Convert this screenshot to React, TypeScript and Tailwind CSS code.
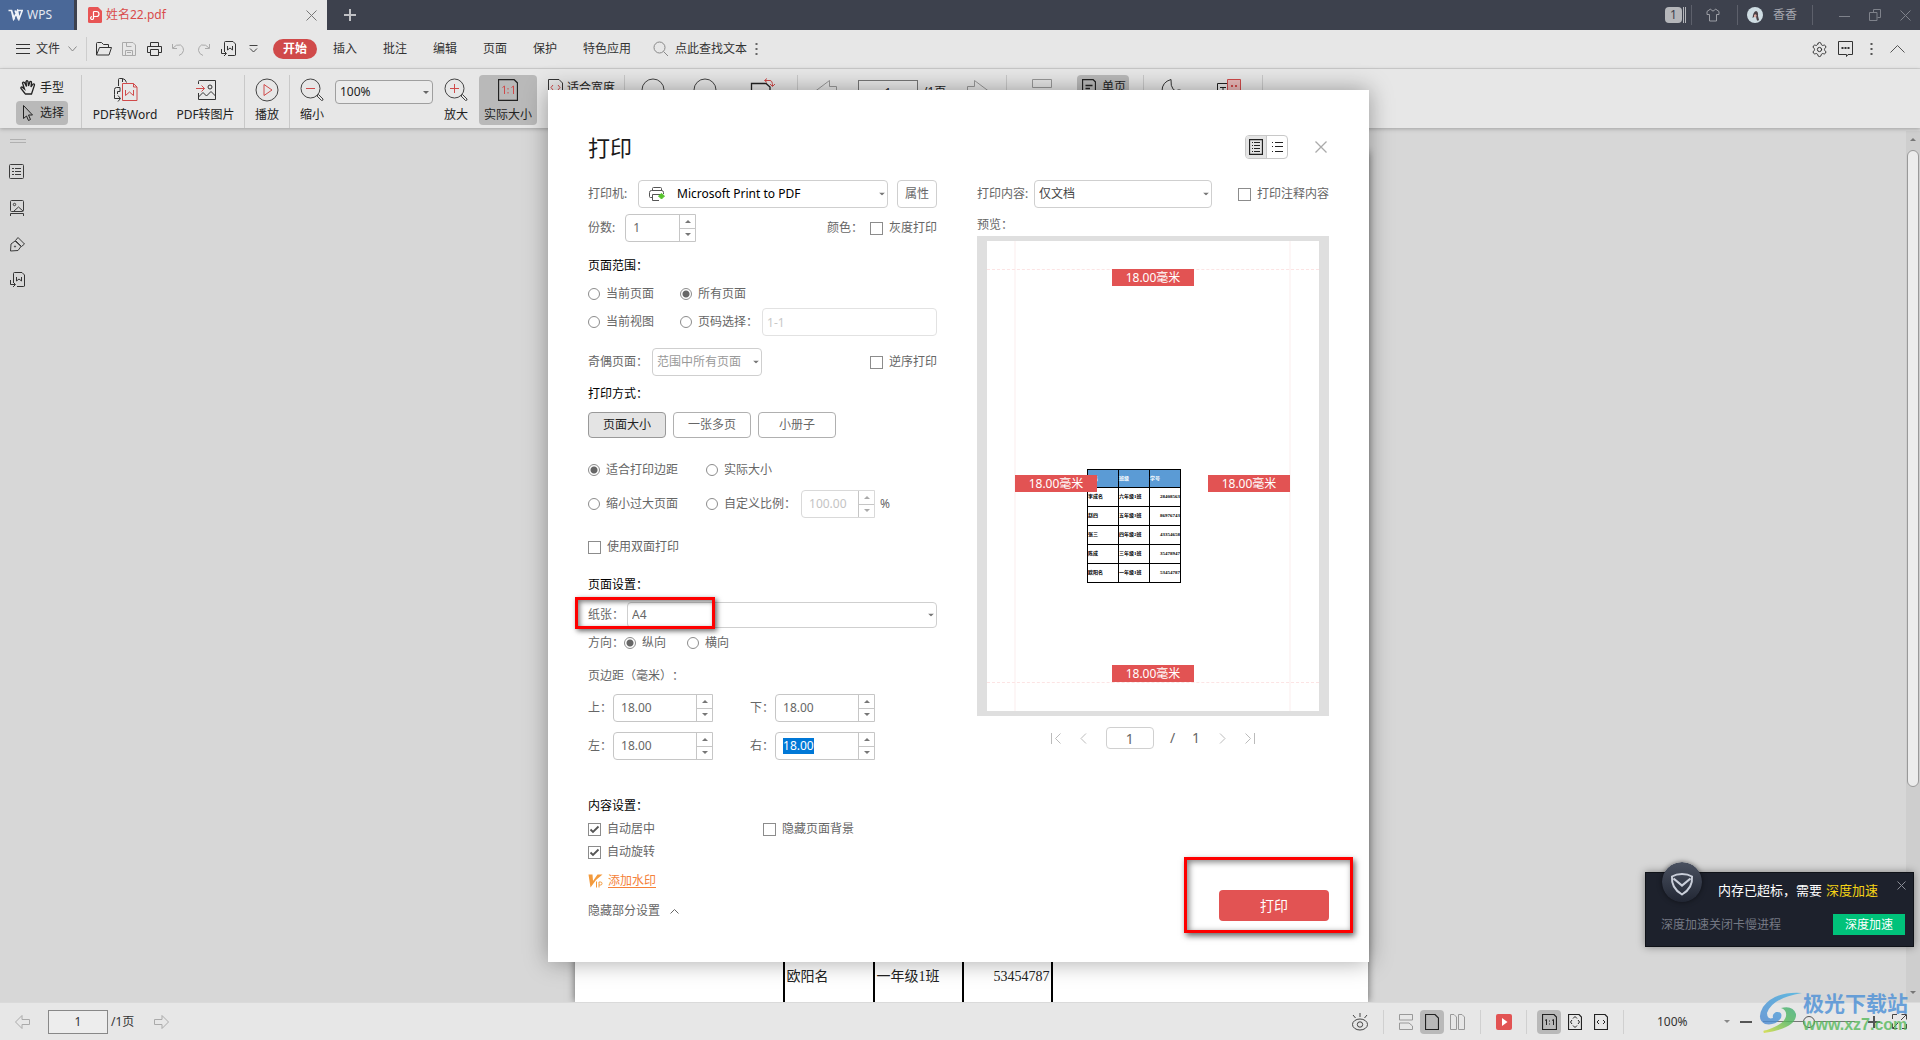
import React, { useEffect, useRef } from "react";
import { Settings as GearIcon } from "lucide-react";

type Kids = { children?: React.ReactNode };

/* ---------- drawing helpers ---------- */

function Ic({ w = 16, h = 16, c = "#3c3c3c", sw = 1, children }: Kids & { w?: number; h?: number; c?: string; sw?: number }) {
  return (
    <svg width={w} height={h} viewBox={`0 0 ${w} ${h}`} fill="none" stroke={c} strokeWidth={sw} className="block shrink-0" aria-hidden="true">
      {children}
    </svg>
  );
}

const Caret = ({ up = false, c = "#666" }: { up?: boolean; c?: string }) => (
  <svg width="6" height="3" viewBox="0 0 6 3" className="block" aria-hidden="true">
    <path d={up ? "M0 3L3 0L6 3Z" : "M0 0H6L3 3Z"} fill={c} />
  </svg>
);

const Sep = () => <span className="h-[53px] w-px shrink-0 self-center bg-[#c9c9c9]" />;

/* ---------- title bar ---------- */

function TitleBar() {
  return (
    <header className="flex h-[30px] shrink-0 items-stretch bg-[#3d414d] text-xs text-[#a4a6ad]">
      <button className="flex w-[74px] items-center gap-1 bg-[#4a6898] pl-2 text-[#e4e9f1]">
        <Ic w={15} h={12} c="#eef2f8" sw={1.6}>
          <path d="M0.5 1.5H3.5L5.5 10L9.5 1.5L11 10L14.2 1.5H9M3.5 1.5L6.5 10.5M7 1.5L10.5 10.5" />
        </Ic>
        WPS
      </button>
      <div className="ml-[3px] flex w-[250px] items-center bg-[#e7e7e7] pl-[11px] text-[#d94b4b]">
        <Ic w={14} h={16} c="#fff" sw={1.2}>
          <path d="M0 1.5Q0 0 1.5 0H10L14 4V14.500Q14 16 12.500 16H1.500Q0 16 0 14.500Z" fill="#e85555" stroke="none" />
          <path d="M5.500 4.500H8.500A2.500 2.500 0 0 1 8.500 9.500H5.500M5.500 4.500V10.500A1.500 1.500 0 1 1 4 9.500" />
        </Ic>
        <span className="ml-1">姓名22.pdf</span>
        <button aria-label="关闭标签" className="ml-auto mr-[10px]">
          <Ic w={11} h={11} c="#777"><path d="M0.500 0.500L10.500 10.500M10.500 0.500L0.500 10.500" /></Ic>
        </button>
      </div>
      <button aria-label="新建" className="ml-[17px] flex items-center">
        <Ic w={12} h={12} c="#c0c1c5" sw={2}><path d="M6 0V12M0 6H12" /></Ic>
      </button>
      <div className="ml-auto flex items-center">
        <span className="flex h-4 w-[17px] items-center justify-center rounded-sm bg-[#b5b6ba] text-[#3d414d]">1</span>
        <span className="ml-px h-4 w-[3px] border-x border-[#b5b6ba]" />
        <span className="ml-[5px] h-5 w-px bg-[#5d606b]" />
        <button aria-label="皮肤" className="ml-[14px]">
          <Ic w={14} h={14} c="#9c9ea5">
            <path d="M4.500 1L1 3.500V6.500H3.500V13H10.500V6.500H13V3.500L9.500 1Q7 5 4.500 1Z" />
          </Ic>
        </button>
        <span className="ml-[17px] h-5 w-px bg-[#5d606b]" />
        <button className="ml-[9px] flex items-center gap-[10px]">
          <svg width="16" height="16" viewBox="0 0 16 16" aria-hidden="true">
            <circle cx="8" cy="8" r="8" fill="#cfdde3" />
            <path d="M5.500 11Q6 5 9 4Q11.500 4.500 11 9L12 13Q10 15 9.500 12L9 9.500L7 10Z" fill="#4b4147" />
            <path d="M7 8Q9 6.500 9.500 8.500L9 10.500L7 10Z" fill="#d9a8a0" />
          </svg>
          香香
        </button>
        <span className="ml-[15px] h-5 w-px bg-[#5d606b]" />
        <button aria-label="最小化" className="ml-[26px]"><Ic w={11} h={12} c="#7f828b"><path d="M0 7.500H11" /></Ic></button>
        <button aria-label="还原" className="ml-[19px]">
          <Ic w={12} h={12} c="#7f828b"><path d="M4.500 3.500V0.500H11.500V8.500H8.500M0.500 3.500H8V11.500H0.500Z" /></Ic>
        </button>
        <button aria-label="关闭" className="ml-[19px] mr-[9px]"><Ic w={11} h={11} c="#7f828b"><path d="M0.500 0.500L10.500 10.500M10.500 0.500L0.500 10.500" /></Ic></button>
      </div>
    </header>
  );
}

/* ---------- menu row ---------- */

const DocWord = () => (
  <Ic w={17} h={16} c="#333">
    <path d="M4.500 10V1.500Q4.500 0.500 5.500 0.500H13L15.500 3V14Q15.500 14.500 14.500 14.500H8" />
    <path d="M7.500 5V9L10 7L12.500 9V5M1.500 8V12.500H6M4 10L6.500 12.500L4 15" />
  </Ic>
);

function MenuBar() {
  return (
    <nav className="flex h-[39px] shrink-0 items-center border-b border-[#d3d3d3] bg-[#e7e7e7] text-xs text-[#333]">
      <button className="ml-4 flex items-center">
        <Ic w={14} h={10} c="#333"><path d="M0 0.500H14M0 4.500H14M0 9.500H14" /></Ic>
        <span className="ml-[6px]">文件</span>
        <span className="ml-2"><Ic w={9} h={6} c="#888"><path d="M0.500 0.500L4.500 5L8.500 0.500" /></Ic></span>
      </button>
      <span className="ml-[9px] h-6 w-px bg-[#cdcdcd]" />
      <button aria-label="打开" className="ml-2">
        <Ic w={18} h={14} c="#333"><path d="M1.500 13V1.500Q1.500 0.500 2.500 0.500H6.500L8.500 2.500H13.500V5.500M1.500 13L4.500 5.500H16.500L14 13Z" /></Ic>
      </button>
      <button aria-label="保存" className="ml-[9px]">
        <Ic w={14} h={14} c="#aaa"><path d="M0.500 0.500H11L13.500 3V13.500H0.500ZM3.500 13V8.500H10.500V13M4.500 0.500V4.500H9.500M5 10.500H9" /></Ic>
      </button>
      <button aria-label="打印" className="ml-[11px]">
        <Ic w={15} h={14} c="#333"><path d="M3.500 4V0.500H11.500V4M3.500 10.500H0.500V4.500H14.500V10.500H11.500M3.500 7.500H11.500V13.500H3.500Z" /></Ic>
      </button>
      <button aria-label="撤销" className="ml-[10px]">
        <Ic w={13} h={13} c="#aaa"><path d="M0.500 1V5.500H5M1 5Q4 1 8.500 2Q12 4 11.500 7.500Q11 11 7 12.500" /></Ic>
      </button>
      <button aria-label="重做" className="ml-[12px]">
        <Ic w={13} h={13} c="#aaa"><path d="M12.500 1V5.500H8M12 5Q9 1 4.500 2Q1 4 1.500 7.500Q2 11 6 12.500" /></Ic>
      </button>
      <button aria-label="导出" className="ml-[10px]"><DocWord /></button>
      <button aria-label="更多" className="ml-[12px]">
        <Ic w={9} h={8} c="#444"><path d="M0.500 0.500H8.500M1 3.500L4.500 7L8 3.500" /></Ic>
      </button>
      <button className="ml-[15px] h-5 w-11 rounded-full bg-[#d04a4a] font-bold text-white">开始</button>
      <div className="ml-4 flex gap-[26px]">
        <button>插入</button>
        <button>批注</button>
        <button>编辑</button>
        <button>页面</button>
        <button>保护</button>
        <button>特色应用</button>
      </div>
      <button className="ml-[22px] flex items-center gap-[6px]">
        <Ic w={16} h={16} c="#888"><circle cx="6.500" cy="6.500" r="5.500" /><path d="M10.500 10.500L15 15" /></Ic>
        点此查找文本
      </button>
      <span className="ml-2"><Ic w={3} h={14} c="none"><path d="M0.500 1h2v2h-2zM0.500 6h2v2h-2zM0.500 11h2v2h-2z" fill="#666" /></Ic></span>
      <div className="ml-auto mr-[15px] flex items-center">
        <button aria-label="设置"><GearIcon size={17} strokeWidth={1.4} color="#333" /></button>
        <button aria-label="反馈" className="ml-[9px]">
          <Ic w={17} h={16} c="#333"><path d="M1.500 0.500H15.500V13.500H11L9.500 15.500V13.500H1.500Z" /><path d="M4.500 7h2M7.500 7h2M10.500 7h2" strokeWidth="2" /></Ic>
        </button>
        <span className="ml-4"><Ic w={3} h={14} c="none"><path d="M0.500 1h2v2h-2zM0.500 6h2v2h-2zM0.500 11h2v2h-2z" fill="#555" /></Ic></span>
        <button aria-label="收起" className="ml-[17px]"><Ic w={15} h={8} c="#555"><path d="M0.500 7.500L7.500 0.500L14.500 7.500" /></Ic></button>
      </div>
    </nav>
  );
}

/* ---------- ribbon ---------- */

function BigBtn({ icon, label, className }: { icon: React.ReactNode; label: string; className: string }) {
  return (
    <button className={`flex h-[50px] shrink-0 flex-col items-center rounded pt-[3px] ${className}`}>
      <span className="flex h-6 items-center">{icon}</span>
      <span className="mt-[5px] whitespace-nowrap leading-4">{label}</span>
    </button>
  );
}

const Lens = ({ plus = false }: { plus?: boolean }) => (
  <Ic w={24} h={24} c="#444">
    <circle cx="10.500" cy="10.500" r="9.500" />
    <path d="M17 18L18.500 16.500L23 21Q23.500 22.500 21.500 22.500Z" />
    <path d={plus ? "M6 10.500H15M10.500 6V15" : "M6 10.500H15"} stroke="#d04a4a" />
  </Ic>
);

function Ribbon() {
  return (
    <div className="z-10 flex h-[59px] shrink-0 items-start bg-[#e7e7e7] pt-[6px] text-xs text-[#222] shadow-[0_1px_4px_rgba(0,0,0,0.25)]">
      <div className="ml-4 flex w-[52px] shrink-0 flex-col gap-px">
        <button className="flex h-[25px] items-center gap-1 pl-1">
          <Ic w={16} h={15} c="#222">
            <path d="M5 13.500L1 8.500Q0.500 7 2 7L4.500 9L2.500 3Q3 1.500 4.500 2.500L6.500 6.500L6 1.500Q7 0 8 1.500L8.500 6L10 1.500Q11.500 1 11.500 2.500L11 7L13 4Q14.500 3.500 14.500 5L12.500 11L11.500 14H5.500Z" strokeWidth="1.300" />
          </Ic>
          手型
        </button>
        <button className="flex h-6 items-center gap-[7px] rounded bg-[#b9b9b9] pl-[7px]">
          <Ic w={10} h={16} c="#222"><path d="M0.500 0.500V13.500L3.500 11L5.500 15.500L7.500 14.500L5.500 10H9.500Z" /></Ic>
          选择
        </button>
      </div>
      <span className="w-[13px] shrink-0" />
      <Sep />
      <BigBtn className="w-[86px]" label="PDF转Word" icon={
        <Ic w={25} h={24} c="#333">
          <path d="M5.500 8V1.500Q5.500 0.500 6.500 0.500H9.500Q12.500 1 13.500 4.500M9.500 0.500V4M1.500 16.500V11.500Q1.500 9.500 3.500 9.500H7V13.500H4.500V16M1.500 16.500V20.500H7M5 17.500L7.500 20.500L5 23.500" />
          <path d="M9.500 5.500H20.500L24 9V22.500H9.500ZM20.500 5.500V9H24M12.500 12V17.500L16.500 14L20.500 17.500V12" stroke="#d04a4a" />
        </Ic>
      } />
      <BigBtn className="w-[75px]" label="PDF转图片" icon={
        <Ic w={22} h={22} c="#333">
          <path d="M3.500 5V2.500Q3.500 1.500 4.500 1.500H20.500V20.500H3.500V14M3.500 18L8 13.500L11.500 17L16 12.500L20.500 17" />
          <circle cx="15" cy="8" r="2" />
          <path d="M1 9.500H9.500M6.500 6.500L9.500 9.500L6.500 12.500" stroke="#d04a4a" />
        </Ic>
      } />
      <span className="w-px shrink-0" />
      <Sep />
      <BigBtn className="w-11" label="播放" icon={
        <Ic w={24} h={24} c="#444"><circle cx="12" cy="12" r="11" /><path d="M9 6.500V17.500L17 12Z" stroke="#d04a4a" /></Ic>
      } />
      <Sep />
      <BigBtn className="w-11" label="缩小" icon={<Lens />} />
      <div className="relative mt-[5px] ml-px h-6 w-[98px] shrink-0">
        <select aria-label="缩放比例" className="h-full w-full appearance-none rounded-sm border border-[#9f9f9f] bg-[#ebebeb] pl-1">
          <option>100%</option>
        </select>
        <span className="pointer-events-none absolute top-[11px] right-1"><Caret /></span>
      </div>
      <BigBtn className="w-[46px]" label="放大" icon={<Lens plus />} />
      <BigBtn className="w-[58px] bg-[#b9b9b9]" label="实际大小" icon={
        <Ic w={20} h={22} c="#222">
          <path d="M0.500 0.500H16L19.500 4V21.500H0.500Z" strokeWidth="1.300" />
          <path d="M4.500 8.500L6.500 7V15M13.500 8.500L15.500 7V15M10 9V10.500M10 13V14.500" stroke="#d04a4a" />
        </Ic>
      } />
      <div className="mt-1 ml-[11px] flex shrink-0 items-center gap-1 leading-4">
        <Ic w={15} h={18} c="#333"><path d="M0.500 0.500H11L14.500 4V17.500H0.500Z" /><path d="M5 6L3 8.500L5 11M10 6L12 8.500L10 11" stroke="#d04a4a" /></Ic>
        适合宽度
      </div>
      <span className="w-[9px] shrink-0" />
      <Sep />
      <div className="mt-[3px] flex shrink-0">
        <span className="flex w-[56px] justify-center"><Ic w={24} h={24} c="#444"><circle cx="12" cy="12" r="11" /></Ic></span>
        <span className="flex w-[48px] justify-center"><Ic w={24} h={24} c="#444"><circle cx="12" cy="12" r="11" /></Ic></span>
        <span className="flex w-[68px] justify-center">
          <Ic w={26} h={24} c="#222"><path d="M1.500 20V5.500H16L20 9V20Z" strokeWidth="1.300" /><path d="M17 0.500L14.500 2.500L17 4.500M15 2.500H20Q22.500 2.500 22.500 8M20 6L22.500 8.500L25 6" stroke="#d04a4a" /></Ic>
        </span>
      </div>
      <Sep />
      <span className="mt-[5px] ml-[17px]"><Ic w={22} h={22} c="#999"><path d="M0.500 11L14.500 0.500V6.500H21.500V16H14.500V21.500Z" /></Ic></span>
      <input aria-label="当前页" defaultValue="1" className="mt-[5px] ml-[21px] h-6 w-[60px] shrink-0 border border-[#777] bg-[#ebebeb] text-center" />
      <span className="mt-[9px] ml-[5px] w-6 shrink-0 whitespace-nowrap">/1页</span>
      <span className="mt-[5px] ml-[20px]"><Ic w={22} h={22} c="#999"><path d="M21.500 11L7.500 0.500V6.500H0.500V16H7.500V21.500Z" /></Ic></span>
      <span className="w-[17px] shrink-0" />
      <Sep />
      <span className="mt-1 ml-[25px]"><Ic w={20} h={22} c="#999"><path d="M0.500 0.500H19.500V8.500H0.500ZM0.500 21V11.500H19.500V21" /></Ic></span>
      <button className="ml-[25px] flex h-6 w-[52px] shrink-0 items-center gap-[6px] rounded bg-[#b9b9b9] pl-[5px] whitespace-nowrap">
        <Ic w={14} h={16} c="#222"><path d="M0.500 0.500H11L13.500 3V15.500H0.500ZM3.500 6.500H10.500M3.500 9.500H8" strokeWidth="1.300" /></Ic>
        单页
      </button>
      <span className="w-[14px] shrink-0" />
      <Sep />
      <span className="mt-1 ml-[16px]"><Ic w={24} h={22} c="#333"><path d="M11 0.500Q2 3 2 12Q4 21 12 21Q20 20 22 13Q10 14 11 0.500Z" /><path d="M17.500 11h3" /></Ic></span>
      <span className="mt-1 ml-[33px]">
        <Ic w={24} h={22} c="#222"><path d="M10.500 4.500H0.500V20.500H18V14M3 8.500H9M6 8.500V15" /><path d="M10.500 0.500H23.500V14.500H10.500Z" fill="#eab9b9" stroke="#d04a4a" /><path d="M14 7h2M18 7h2" stroke="#d04a4a" strokeWidth="2" /></Ic>
      </span>
      <span className="w-[21px] shrink-0" />
      <Sep />
    </div>
  );
}

/* ---------- document area ---------- */

const DOC_ROWS = [
  ["李成名", "六年级1班", "28408563"],
  ["赵四", "五年级3班", "86976743"],
  ["张三", "四年级2班", "43354658"],
  ["陈成", "三年级1班", "35478947"],
  ["欧阳名", "一年级1班", "53454787"],
];

function Workspace() {
  return (
    <main className="flex min-h-0 flex-1 bg-[#d7d7d7]">
      <aside className="flex w-9 shrink-0 flex-col items-start pl-[9px] pt-[11px]">
        <Ic w={17} h={5} c="#b0b0b0"><path d="M1 0.500H17M1 3.500H17" /></Ic>
        <button aria-label="书签" className="mt-5">
          <Ic w={16} h={16}><rect x="0.500" y="0.500" width="14" height="14" rx="1" /><path d="M3 4.500H5M6 4.500H12M3 7.500H5M6 7.500H12M3 10.500H5M6 10.500H12" /></Ic>
        </button>
        <button aria-label="缩略图" className="mt-5">
          <Ic w={16} h={17}><rect x="1.500" y="0.500" width="13" height="11" rx="1" /><circle cx="5.500" cy="4.500" r="1.200" /><path d="M5 11L9.500 7L14 11M1.500 16V13.500H14.500V16" /></Ic>
        </button>
        <button aria-label="签名" className="mt-5">
          <Ic w={17} h={15}><path d="M1.500 14L2 7L6 4L12 9.500L9 13.500ZM6.500 3.500L9 0.500L15.500 7L12.500 9.500Z" /><circle cx="6" cy="9.500" r="0.600" /></Ic>
        </button>
        <button aria-label="转换" className="mt-5"><DocWord /></button>
      </aside>
      <div className="flex min-w-0 flex-1 justify-center overflow-hidden">
        <div className="mt-6 flex w-[793px] flex-col items-end justify-end bg-white shadow-[0_0_8px_rgba(0,0,0,0.55)]">
          <table className="mr-[315px] border-collapse text-sm leading-5 text-[#222] font-['Liberation_Serif','Noto_Sans_CJK_SC',serif]">
            <tbody>
              {DOC_ROWS.map((r) => (
                <tr key={r[0]} className="h-[52px] last:[&>td]:border-b-0">
                  <td className="w-[90px] border-2 border-black px-[2px]">{r[0]}</td>
                  <td className="w-[89px] border-2 border-black px-[2px]">{r[1]}</td>
                  <td className="w-[89px] border-2 border-black px-px text-right">{r[2]}</td>
                </tr>
              ))}
            </tbody>
          </table>
        </div>
      </div>
      <div className="mt-[3px] flex w-[14px] shrink-0 flex-col items-center justify-between bg-[#cecece]">
        <span className="pt-[7px]"><Caret up c="#777" /></span>
        <span className="mt-[9px] mb-auto h-[637px] w-3 rounded-full border border-[#999] bg-[#ececec]" />
        <span className="pb-2"><Caret c="#777" /></span>
      </div>
    </main>
  );
}

/* ---------- status bar ---------- */

const VSep = () => <span className="block h-6 w-px bg-[#d0d0d0]" />;

function StatusBar() {
  return (
    <footer className="flex h-[38px] shrink-0 items-center border-t border-[#dadada] bg-[#e7e7e7] text-xs text-[#333]">
      <button aria-label="上一页" className="ml-[15px]"><Ic w={15} h={14} c="#aaa"><path d="M0.500 7L7 0.500V4.500H14.500V9.500H7V13.500Z" /></Ic></button>
      <input aria-label="页码" defaultValue="1" className="ml-[18px] h-6 w-[60px] border border-[#888] bg-[#ededed] text-center" />
      <span className="ml-[3px]">/1页</span>
      <button aria-label="下一页" className="ml-5"><Ic w={15} h={14} c="#aaa"><path d="M14.500 7L8 0.500V4.500H0.500V9.500H8V13.500Z" /></Ic></button>
      <div className="ml-auto mr-[13px] flex items-center">
        <button aria-label="护眼">
          <Ic w={16} h={18} c="#444"><ellipse cx="8" cy="11.500" rx="7.500" ry="5.500" /><circle cx="8" cy="11.500" r="2.700" /><path d="M8 0V4M1 2L3.500 5M15 2L12.500 5" /></Ic>
        </button>
        <span className="ml-[15px]"><VSep /></span>
        <button aria-label="连续" className="ml-[15px]"><Ic w={14} h={16} c="#999"><path d="M0.500 0.500H13.500V6H0.500ZM0.500 15.500V9H10L13.500 12V15.500Z" /></Ic></button>
        <button aria-label="单页视图" className="ml-[7px] flex size-6 items-center justify-center rounded bg-[#b9b9b9]">
          <Ic w={14} h={16} c="#222"><path d="M0.500 0.500H10L13.500 4V15.500H0.500Z" strokeWidth="1.200" /></Ic>
        </button>
        <button aria-label="双页视图" className="ml-[6px]"><Ic w={15} h={16} c="#999"><path d="M0.500 0.500H4L6.500 3V15.500H0.500ZM8.500 0.500H12L14.500 3V15.500H8.500Z" /></Ic></button>
        <span className="ml-[15px]"><VSep /></span>
        <button aria-label="播放幻灯" className="ml-[15px]"><Ic w={16} h={16} c="none"><rect width="16" height="16" rx="2" fill="#e25353" /><path d="M6 4V12L11.500 8Z" fill="#fff" /></Ic></button>
        <span className="ml-[14px]"><VSep /></span>
        <button aria-label="实际大小" className="ml-[10px] flex size-6 items-center justify-center rounded bg-[#b9b9b9]">
          <Ic w={15} h={16} c="#222"><path d="M0.500 0.500H12L14.500 3V15.500H0.500Z" strokeWidth="1.200" /><path d="M3 6.500L4.500 5.500V11M10 6.500L11.500 5.500V11M7.500 6.500V7.500M7.500 9.500V10.500" /></Ic>
        </button>
        <button aria-label="适合页面" className="ml-[7px]"><Ic w={14} h={16} c="#222"><path d="M0.500 0.500H11L13.500 3V15.500H0.500Z" strokeWidth="1.200" /><path d="M5 4.500L7 2.500L9 4.500M5 11.500L7 13.500L9 11.500M4 6L2.500 8L4 10M10 6L11.500 8L10 10" /></Ic></button>
        <button aria-label="适合宽度" className="ml-3"><Ic w={14} h={16} c="#222"><path d="M0.500 0.500H11L13.500 3V15.500H0.500Z" strokeWidth="1.200" /><path d="M5 6L3 8L5 10M9 6L11 8L9 10" /></Ic></button>
        <span className="ml-[15px]"><VSep /></span>
        <button className="ml-[33px] flex w-[73px] items-center justify-between">100% <Caret c="#888" /></button>
        <button aria-label="缩小" className="ml-[10px]"><Ic w={12} h={12} c="#555" sw={2}><path d="M0 6H12" /></Ic></button>
        <input
          type="range"
          aria-label="缩放"
          defaultValue={50}
          className="ml-[11px] h-3 w-[92px] appearance-none bg-[linear-gradient(#777,#777)] bg-[length:100%_1px] bg-center bg-no-repeat [&::-webkit-slider-thumb]:size-3 [&::-webkit-slider-thumb]:appearance-none [&::-webkit-slider-thumb]:rounded-full [&::-webkit-slider-thumb]:border [&::-webkit-slider-thumb]:border-[#555] [&::-webkit-slider-thumb]:bg-[#e7e7e7]"
        />
        <button aria-label="放大" className="ml-[13px]"><Ic w={12} h={12} c="#555" sw={2}><path d="M0 6H12M6 0V12" /></Ic></button>
        <button aria-label="全屏" className="ml-3"><Ic w={15} h={15} c="#444"><path d="M5 0.500H0.500V5M10 14.500H14.500V10M9.500 0.500H14.500V5.500M14 1L9 6M5.500 14.500H0.500V9.500M1 14L6 9" /></Ic></button>
      </div>
    </footer>
  );
}

/* ---------- form controls ---------- */

function Radio({ name, label, on = false, className = "" }: { name: string; label: string; on?: boolean; className?: string }) {
  return (
    <label className={`flex shrink-0 items-center gap-[6px] whitespace-nowrap ${className}`}>
      <input type="radio" name={name} defaultChecked={on} className="size-3 appearance-none rounded-full border border-[#8c8c8c] checked:bg-[radial-gradient(circle,#666_0_2px,#666_3px,transparent_4px)]" />
      {label}
    </label>
  );
}

function Check({ label, on = false, className = "" }: { label: string; on?: boolean; className?: string }) {
  return (
    <label className={`flex shrink-0 items-center gap-[6px] whitespace-nowrap ${className}`}>
      <span className="relative block size-[13px]">
        <input type="checkbox" defaultChecked={on} className="peer block size-full appearance-none border border-[#8c8c8c]" />
        <svg viewBox="0 0 13 13" className="pointer-events-none absolute inset-0 hidden peer-checked:block" fill="none" stroke="#555" strokeWidth="1.800" aria-hidden="true">
          <path d="M2.500 6.500L5 9L10.500 3.500" />
        </svg>
      </span>
      {label}
    </label>
  );
}

function Pick({ label, value, labelWidth, width, tone = "text-[#444]", icon, pad = "pl-1", height = "h-7", full = false }: {
  label: string; value: string; labelWidth: string; width: string; tone?: string; icon?: React.ReactNode; pad?: string; height?: string; full?: boolean;
}) {
  return (
    <label className={`flex items-center whitespace-nowrap ${full ? "flex-1" : ""}`}>
      <span className={`shrink-0 ${labelWidth}`}>{label}</span>
      <span className={`relative block ${height} ${width}`}>
        <select className={`h-full w-full appearance-none rounded-sm border border-[#cfcfcf] bg-white ${pad} ${tone}`}>
          <option>{value}</option>
        </select>
        {icon && <span className="pointer-events-none absolute top-1/2 left-[11px] -translate-y-1/2">{icon}</span>}
        <span className="pointer-events-none absolute top-1/2 right-[3px] -translate-y-1/2"><Caret c="#777" /></span>
      </span>
    </label>
  );
}

function Spin({ label, value, width, dim = false, selected = false, gap = "gap-px", className = "" }: {
  label: string; value: string; width: string; dim?: boolean; selected?: boolean; gap?: string; className?: string;
}) {
  const box = useRef<HTMLInputElement>(null);
  useEffect(() => {
    if (selected && box.current) {
      box.current.focus();
      box.current.select();
    }
  }, [selected]);
  const c = dim ? "#aaa" : "#777";
  return (
    <span className={`flex items-center ${gap} ${className}`}>
      {label && <span className="whitespace-nowrap">{label}</span>}
      <span className={`flex h-7 rounded-l-sm border ${dim ? "border-[#d9d9d9] text-[#c4c4c4]" : "border-[#c6c6c6]"} ${width}`}>
        <input ref={box} aria-label={label || "自定义比例"} defaultValue={value} className="w-full min-w-0 flex-1 bg-transparent pl-[7px] outline-none selection:bg-[#0078d7] selection:text-white" />
        <span className="flex w-4 shrink-0 flex-col border-l border-[#c6c6c6]">
          <button aria-label="增加" className="flex flex-1 items-center justify-center border-b border-[#c6c6c6]"><Caret up c={c} /></button>
          <button aria-label="减少" className="flex flex-1 items-center justify-center"><Caret c={c} /></button>
        </span>
      </span>
    </span>
  );
}

const Heading = ({ children, className }: Kids & { className: string }) => (
  <h3 className={`h-5 text-xs leading-5 text-black ${className}`}>{children}</h3>
);

const Tag = ({ className }: { className: string }) => (
  <span className={`absolute flex h-[17px] w-[82px] items-center justify-center bg-[#e25353] text-white ${className}`}>18.00毫米</span>
);

/* ---------- print dialog ---------- */

function Settings() {
  return (
    <section className="flex w-[349px] shrink-0 flex-col">
      <div className="flex h-7 items-center justify-between">
        <Pick label="打印机:" value="Microsoft Print to PDF" labelWidth="w-[50px]" width="w-[250px]" tone="text-black" pad="pl-[38px]" icon={
          <Ic w={16} h={14} c="#555">
            <path d="M3.500 4V1.500Q3.500 0.500 4.500 0.500H11.500Q12.500 0.500 12.500 1.500V4M3.500 10.500H1.500Q0.500 10.500 0.500 9.500V5.500Q0.500 3.500 2.500 3.500H12.500Q14.500 3.500 14.500 5.500V7M3.500 7.500H11.500M3.500 7.500V13.500H10" />
            <path d="M12.500 6.500L15.500 9L12.500 12L9.500 9Z" fill="#57c22d" stroke="#57c22d" />
          </Ic>
        } />
        <button className="h-7 w-10 rounded-sm border border-[#cfcfcf]">属性</button>
      </div>
      <div className="mt-[6px] flex h-7 items-center">
        <Spin label="份数:" value="1" width="w-[71px]" gap="gap-[10px]" />
        <span className="ml-auto mr-[7px]">颜色：</span>
        <Check label="灰度打印" />
      </div>

      <Heading className="mt-[14px]">页面范围：</Heading>
      <div className="mt-1 grid grid-cols-[92px_minmax(0,1fr)]">
        <Radio name="range" label="当前页面" />
        <Radio name="range" label="所有页面" on className="h-7" />
        <Radio name="range" label="当前视图" />
        <div className="flex h-7 items-center">
          <Radio name="range" label="页码选择：" />
          <input aria-label="页码范围" placeholder="1-1" className="ml-1 h-7 w-full min-w-0 flex-1 rounded border border-[#e2e2e2] pl-1 placeholder:text-[#c8c8c8]" />
        </div>
      </div>
      <div className="mt-3 flex h-7 items-center justify-between">
        <Pick label="奇偶页面：" value="范围中所有页面" labelWidth="w-16" width="w-[110px]" tone="text-[#999]" />
        <Check label="逆序打印" />
      </div>

      <Heading className="mt-2">打印方式：</Heading>
      <div className="mt-2 flex gap-[7px]">
        <button className="h-[26px] w-[78px] rounded-sm border border-[#999] bg-[#e4e4e4] text-[#222]">页面大小</button>
        <button className="h-[26px] w-[78px] rounded-sm border border-[#b0b0b0]">一张多页</button>
        <button className="h-[26px] w-[78px] rounded-sm border border-[#b0b0b0]">小册子</button>
      </div>
      <div className="mt-[18px] grid grid-cols-[118px_minmax(0,1fr)] gap-y-[6px]">
        <Radio name="scale" label="适合打印边距" on />
        <Radio name="scale" label="实际大小" className="h-7" />
        <Radio name="scale" label="缩小过大页面" />
        <div className="flex h-7 items-center">
          <Radio name="scale" label="自定义比例：" />
          <Spin label="" value="100.00" width="w-[74px]" dim className="ml-[5px]" />
          <span className="ml-[5px]">%</span>
        </div>
      </div>
      <Check label="使用双面打印" className="mt-[19px] h-5" />

      <Heading className="mt-[18px]">页面设置：</Heading>
      <div className="relative mt-[7px] flex h-[26px]">
        <Pick label="纸张：" value="A4" labelWidth="w-[39px]" width="flex-1" height="h-[26px]" tone="text-[#666]" full />
        <span className="pointer-events-none absolute -top-[5px] -left-[13px] h-8 w-[140px] border-3 border-[#fe0000] shadow-[2px_2px_5px_rgba(0,0,0,0.6),inset_2px_2px_5px_rgba(0,0,0,0.5)]" />
      </div>
      <div className="mt-[5px] flex h-5 items-center">
        <span className="w-9">方向：</span>
        <Radio name="orient" label="纵向" on className="w-[63px]" />
        <Radio name="orient" label="横向" />
      </div>
      <div className="mt-[13px] h-5 leading-5 [text-spacing-trim:space-all]">页边距（毫米）：</div>
      <div className="mt-2 grid grid-cols-[162px_minmax(0,1fr)] gap-y-[10px]">
        <Spin label="上：" value="18.00" width="w-[100px]" />
        <Spin label="下：" value="18.00" width="w-[100px]" />
        <Spin label="左：" value="18.00" width="w-[100px]" />
        <Spin label="右：" value="18.00" width="w-[100px]" selected />
      </div>

      <Heading className="mt-9">内容设置：</Heading>
      <div className="mt-[3px] grid grid-cols-[175px_1fr] gap-y-[3px]">
        <Check label="自动居中" on className="h-5" />
        <Check label="隐藏页面背景" />
        <Check label="自动旋转" on className="h-5" />
      </div>
      <a href="#watermark" className="mt-[9px] flex h-5 items-center gap-[5px] text-[#f5823a]">
        <svg width="15" height="14" viewBox="0 0 15 14" aria-hidden="true">
          <path d="M0.500 0.500H4.500L5 7L9.500 0.500H14.500L8 6L2.500 13.500Z" fill="#f39a3c" />
          <path d="M8.500 7.500V13.500M11 13.500V8H12.500Q14 8 14 9.500Q14 11 12.500 11H11" fill="none" stroke="#f39a3c" />
        </svg>
        <span className="underline underline-offset-2">添加水印</span>
      </a>
      <button className="mt-[10px] flex h-5 items-center gap-[10px] self-start">
        隐藏部分设置
        <Ic w={9} h={5} c="#666"><path d="M0.500 4.500L4.500 0.500L8.500 4.500" /></Ic>
      </button>
    </section>
  );
}

function Preview() {
  return (
    <section className="flex min-w-0 flex-1 flex-col">
      <div className="flex h-7 items-center justify-between">
        <Pick label="打印内容:" value="仅文档" labelWidth="w-[57px]" width="w-[178px]" />
        <Check label="打印注释内容" />
      </div>
      <div className="mt-[7px] h-5 leading-5">预览：</div>
      <div className="mt-px bg-[#dfdfdf] px-[10px] py-[5px]">
        <div className="relative h-[470px] bg-white">
          <span className="absolute inset-y-0 left-[27px] w-[2px] bg-[#fdf6f6]" />
          <span className="absolute inset-y-0 right-[28px] w-[2px] bg-[#fdf6f6]" />
          <span className="absolute inset-x-0 top-[28px] border-t border-dashed border-[#fce4e4]" />
          <span className="absolute inset-x-0 bottom-[28px] border-t border-dashed border-[#fce4e4]" />
          <table className="absolute top-[228px] left-[100px] w-[94px] table-fixed border-collapse border border-black text-[5px] leading-[6px] font-bold text-black font-['Liberation_Serif','Noto_Sans_CJK_SC',serif]">
            <thead>
              <tr className="h-[18px] bg-[#5b9bd5] text-left text-white">
                <th className="border border-black p-0">姓名</th>
                <th className="border border-black p-0">班级</th>
                <th className="border border-black p-0">学号</th>
              </tr>
            </thead>
            <tbody>
              {DOC_ROWS.map((r) => (
                <tr key={r[0]} className="h-[19px] whitespace-nowrap">
                  <td className="border border-black p-0">{r[0]}</td>
                  <td className="border border-black p-0">{r[1]}</td>
                  <td className="border border-black p-0 text-right">{r[2]}</td>
                </tr>
              ))}
            </tbody>
          </table>
          <Tag className="top-7 left-[125px]" />
          <Tag className="top-[234px] left-7" />
          <Tag className="top-[234px] right-[29px]" />
          <Tag className="bottom-[29px] left-[125px]" />
        </div>
      </div>
      <div className="mt-[11px] flex h-[22px] items-center justify-center text-sm">
        <button aria-label="首页"><Ic w={10} h={11} c="#bbb"><path d="M0.500 0V11M9.500 0.500L4.500 5.500L9.500 10.500" /></Ic></button>
        <button aria-label="前一页" className="ml-[19px]"><Ic w={7} h={11} c="#bbb"><path d="M6 0.500L1 5.500L6 10.500" /></Ic></button>
        <input aria-label="预览页" defaultValue="1" className="ml-[19px] h-[22px] w-12 rounded border border-[#d0d0d0] text-center" />
        <span className="ml-[16px]">/</span>
        <span className="ml-[17px]">1</span>
        <button aria-label="后一页" className="ml-[19px]"><Ic w={7} h={11} c="#bbb"><path d="M1 0.500L6 5.500L1 10.500" /></Ic></button>
        <button aria-label="末页" className="ml-[19px]"><Ic w={10} h={11} c="#bbb"><path d="M9.500 0V11M0.500 0.500L5.500 5.500L0.500 10.500" /></Ic></button>
      </div>
      <div className="relative mt-auto self-end">
        <button className="block h-[31px] w-[110px] rounded-sm bg-[#e25353] text-sm text-white">打印</button>
        <span className="pointer-events-none absolute -top-[33px] -right-6 h-[76px] w-[169px] border-3 border-[#fe0000] shadow-[2px_3px_6px_rgba(0,0,0,0.6),inset_2px_2px_6px_rgba(0,0,0,0.5)]" />
      </div>
    </section>
  );
}

function PrintDialog() {
  return (
    <div className="absolute inset-0 z-20 flex items-start justify-center pt-[90px] pr-[3px]">
      <div role="dialog" aria-label="打印" className="w-[821px] bg-white px-10 pt-10 pb-[41px] text-xs text-[#666] shadow-[0_0_22px_rgba(0,0,0,0.35)]">
        <div className="mb-4 flex h-[34px] items-center">
          <h2 className="text-[22px] leading-[34px] text-[#1a1a1a]">打印</h2>
          <div className="ml-auto flex h-6 overflow-hidden rounded-sm border border-[#c8c8c8]">
            <button aria-label="详细" className="flex w-[21px] items-center justify-center border-r border-[#c8c8c8] bg-[#e4e4e4]">
              <Ic w={14} h={16} c="#222"><path d="M0.500 0.500H13.500V15.500H0.500Z" strokeWidth="1.300" /><path d="M3 3.500H4M5 3.500H11M3 6.500H4M5 6.500H11M3 9.500H4M5 9.500H11M3 12.500H4M5 12.500H11" /></Ic>
            </button>
            <button aria-label="列表" className="flex w-5 items-center justify-center">
              <Ic w={11} h={10} c="#222"><path d="M0 0.500H1M3 0.500H11M0 4.500H1M3 4.500H11M0 9.500H1M3 9.500H11" /></Ic>
            </button>
          </div>
          <button aria-label="关闭对话框" className="ml-[27px] mr-[2px]"><Ic w={12} h={12} c="#aaa" sw={1.3}><path d="M0.500 0.500L11.500 11.500M11.500 0.500L0.500 11.500" /></Ic></button>
        </div>
        <div className="flex gap-10">
          <Settings />
          <Preview />
        </div>
      </div>
    </div>
  );
}

/* ---------- toast and site mark ---------- */

function Toast() {
  return (
    <aside className="absolute right-[6px] bottom-[93px] z-30 w-[269px] border border-[#0f1218] bg-[#1d212c] px-[8px] pt-[8px] pb-[11px] shadow-[0_0_8px_rgba(0,0,0,0.4)]">
      <svg width="40" height="40" viewBox="0 0 40 40" className="absolute -top-[11px] left-4 rounded-full shadow-[0_0_5px_rgba(0,0,0,0.5)]" aria-hidden="true">
        <defs>
          <linearGradient id="orb" x1="0" y1="0" x2="0" y2="1"><stop offset="0" stopColor="#4a5160" /><stop offset="1" stopColor="#222734" /></linearGradient>
        </defs>
        <circle cx="20" cy="20" r="20" fill="url(#orb)" />
        <path d="M20 12Q26 12 30 14.500Q31 26 20 32.500Q9 26 10 14.500Q14 12 20 12Z" fill="none" stroke="#c9ced9" strokeWidth="2" />
        <path d="M11.500 16.500L20 23.500L28.500 16.500" fill="none" stroke="#c9ced9" strokeWidth="2.200" />
      </svg>
      <div className="flex h-5 items-center pl-16 text-[13px] text-white">
        内存已超标，需要<span className="ml-1 text-[#f5d415]">深度加速</span>
        <button aria-label="关闭提示" className="ml-auto -mr-px mb-3"><Ic w={9} h={9} c="#8a8d96"><path d="M0.500 0.500L8.500 8.500M8.500 0.500L0.500 8.500" /></Ic></button>
      </div>
      <div className="mt-[13px] flex items-center justify-between pl-[7px] text-xs text-[#757984]">
        深度加速关闭卡慢进程
        <button className="h-[21px] w-[72px] bg-[#00c27a] text-white">深度加速</button>
      </div>
    </aside>
  );
}

function SiteMark() {
  return (
    <div className="pointer-events-none absolute right-3 bottom-1 z-30 flex items-start opacity-80">
      <svg width="44" height="42" viewBox="0 0 44 42" aria-hidden="true">
        <defs>
          <linearGradient id="sw1" x1="0" y1="1" x2="1" y2="0"><stop offset="0" stopColor="#4c86d0" /><stop offset="1" stopColor="#45b4e4" /></linearGradient>
          <linearGradient id="sw2" x1="0" y1="1" x2="1" y2="0"><stop offset="0" stopColor="#d8df3c" /><stop offset="0.600" stopColor="#55b95a" /><stop offset="1" stopColor="#3fae7a" /></linearGradient>
        </defs>
        <path d="M43 1Q16 -1 4 15Q-3 27 6 32Q16 34 22 26Q24 19 17 20Q13 22 14 26Q8 28 8 21Q13 6 43 1Z" fill="url(#sw1)" />
        <path d="M22 16Q34 13 37 22Q38 36 5 41Q3 38 8 38Q26 32 27 24Q28 18 22 16Z" fill="url(#sw2)" />
      </svg>
      <div className="font-bold">
        <div className="text-[21px] leading-[22px] whitespace-nowrap text-[#4a8fd6]">极光下载站</div>
        <div className="text-base leading-[22px] text-[#57b95c] font-['Liberation_Sans',sans-serif]">www.xz7.com</div>
      </div>
    </div>
  );
}

export default function App() {
  return (
    <div className="relative flex h-screen flex-col overflow-hidden font-['Noto_Sans','Noto_Sans_CJK_SC',sans-serif]">
      <TitleBar />
      <MenuBar />
      <Ribbon />
      <Workspace />
      <StatusBar />
      <PrintDialog />
      <Toast />
      <SiteMark />
    </div>
  );
}
